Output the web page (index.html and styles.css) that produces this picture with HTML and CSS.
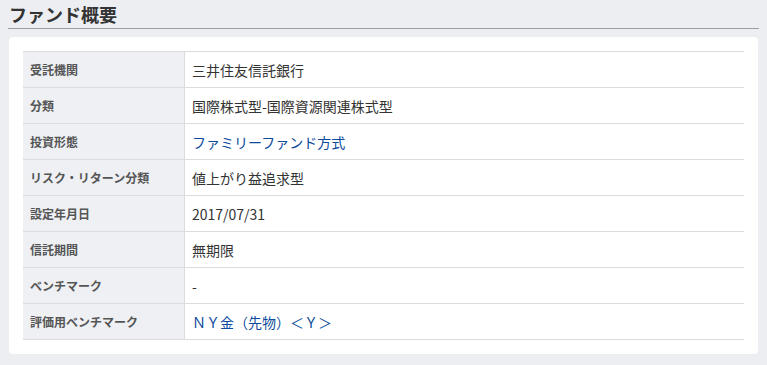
FILE: index.html
```html
<!DOCTYPE html>
<html lang="ja">
<head>
    <meta charset="UTF-8">
    <meta name="viewport" content="width=device-width, initial-scale=1.0">
    <title>ファンド概要</title>
    <link rel="stylesheet" href="styles.css">
</head>
<body>
    <h2 class="titulo">ファンド概要</h2>

    <div class="tarjeta">
        <table class="tabla-fondo">
            <tbody>
                <tr><th>受託機関</th><td>三井住友信託銀行</td></tr>
                <tr><th>分類</th><td>国際株式型-国際資源関連株式型</td></tr>
                <tr><th>投資形態</th><td><a href="#">ファミリーファンド方式</a></td></tr>
                <tr><th>リスク・リターン分類</th><td>値上がり益追求型</td></tr>
                <tr><th>設定年月日</th><td>2017/07/31</td></tr>
                <tr><th>信託期間</th><td>無期限</td></tr>
                <tr><th>ベンチマーク</th><td>-</td></tr>
                <tr><th>評価用ベンチマーク</th><td><a href="#">ＮＹ金（先物）＜Ｙ＞</a></td></tr>
            </tbody>
        </table>
    </div>
</body>
</html>
```

FILE: styles.css
```css
body {
    margin: 0;
    padding: 0 8px;
    background-color: #eceef1;
    color: #333;
    font-family: "Noto Sans CJK JP", "Noto Sans", sans-serif;
}
.titulo {
    margin: 0;
    padding: 3px 0 2px 1px;
    font-size: 18px;
    line-height: 23px;
    font-weight: bold;
    color: #333;
    border-bottom: 1px solid #a0a0a0;
}
.tarjeta {
    margin: 8px 1px 0;
    padding: 14px;
    background-color: #fff;
    border-radius: 4px;
}
.tabla-fondo {
    width: 100%;
    border-collapse: collapse;
}
.tabla-fondo th, .tabla-fondo td {
    height: 35px;
    padding: 0 7px;
    border-top: 1px solid #dcdcdc;
    border-bottom: 1px solid #dcdcdc;
    text-align: left;
    vertical-align: middle;
}
.tabla-fondo th {
    width: 147px;
    background-color: #eef0f4;
    border-right: 1px solid #dcdcdc;
    font-size: 12px;
    font-weight: bold;
    color: #555;
}
.tabla-fondo td {
    font-size: 14px;
    color: #333;
}
.tabla-fondo a {
    color: #0c4b9c;
    text-decoration: none;
}
```
